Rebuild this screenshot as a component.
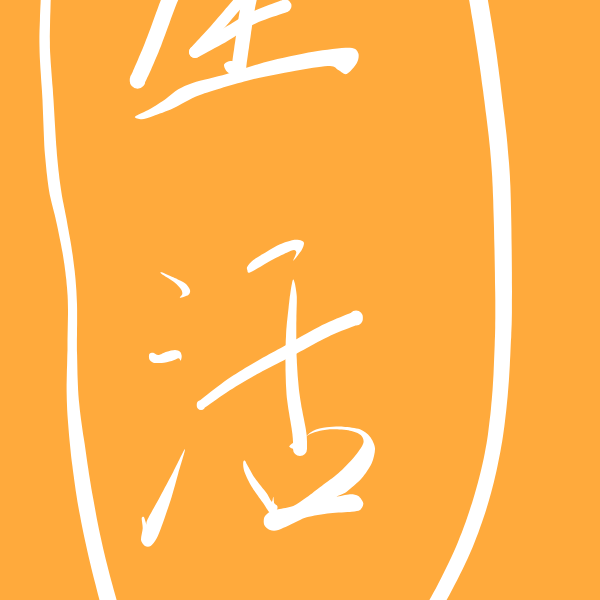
import React from "react";

type Pt = [number, number];
type BrushPt = [number, number, number];

// hand drawn mark: each stroke is either a centre line with widths, or a traced outline

const fmt = (n: number) => n.toFixed(1);

// closed smooth shape through the points
function blobPath(pts: Pt[]) {
  const n = pts.length;
  let d = `M${fmt(pts[0][0])} ${fmt(pts[0][1])}`;
  for (let i = 0; i < n; i++) {
    const p0 = pts[(i - 1 + n) % n];
    const p1 = pts[i];
    const p2 = pts[(i + 1) % n];
    const p3 = pts[(i + 2) % n];
    const c1x = p1[0] + (p2[0] - p0[0]) / 7;
    const c1y = p1[1] + (p2[1] - p0[1]) / 7;
    const c2x = p2[0] - (p3[0] - p1[0]) / 7;
    const c2y = p2[1] - (p3[1] - p1[1]) / 7;
    d += `C${fmt(c1x)} ${fmt(c1y)} ${fmt(c2x)} ${fmt(c2y)} ${fmt(p2[0])} ${fmt(p2[1])}`;
  }
  return d + "Z";
}

// outlines were read from 3x crops, so bring them back to page pixels
const fromCrop = (ox: number, oy: number, pts: Pt[]): Pt[] =>
  pts.map(([x, y]) => [ox + x / 3, oy + y / 3]);

// variable width stroke with round ends
function brushPath(pts: BrushPt[]) {
  const dense: BrushPt[] = [];
  for (let i = 0; i < pts.length - 1; i++) {
    const p0 = pts[Math.max(i - 1, 0)];
    const p1 = pts[i];
    const p2 = pts[i + 1];
    const p3 = pts[Math.min(i + 2, pts.length - 1)];
    for (let s = 0; s < 10; s++) {
      const t = s / 10;
      const cr = (a: number, b: number, c: number, e: number) =>
        0.5 * (2 * b + (c - a) * t + (2 * a - 5 * b + 4 * c - e) * t * t + (3 * b - a - 3 * c + e) * t * t * t);
      dense.push([cr(p0[0], p1[0], p2[0], p3[0]), cr(p0[1], p1[1], p2[1], p3[1]), p1[2] + (p2[2] - p1[2]) * t]);
    }
  }
  dense.push(pts[pts.length - 1]);
  const left: string[] = [];
  const right: string[] = [];
  dense.forEach((p, i) => {
    const a = dense[Math.max(i - 1, 0)];
    const b = dense[Math.min(i + 1, dense.length - 1)];
    const dx = b[0] - a[0];
    const dy = b[1] - a[1];
    const len = Math.hypot(dx, dy) || 1;
    const nx = (-dy / len) * (p[2] / 2);
    const ny = (dx / len) * (p[2] / 2);
    left.push(`${fmt(p[0] + nx)} ${fmt(p[1] + ny)}`);
    right.unshift(`${fmt(p[0] - nx)} ${fmt(p[1] - ny)}`);
  });
  const cap = (p: BrushPt) => {
    const r = fmt(p[2] / 2);
    return `M${fmt(p[0] - p[2] / 2)} ${fmt(p[1])}a${r} ${r} 0 1 0 ${fmt(p[2])} 0a${r} ${r} 0 1 0 ${fmt(-p[2])} 0Z`;
  };
  return `M${left.join("L")}L${right.join("L")}Z${cap(pts[0])}${cap(pts[pts.length - 1])}`;
}

const brushes: BrushPt[][] = [
  // oval, left side
  [[46, -8, 10], [45.7, 0, 10], [44.7, 47, 10.5], [48, 100, 11], [50.6, 150, 12], [55, 190, 12], [61.3, 220, 10.5], [68.5, 260, 9.5], [72.3, 300, 9], [72.2, 350, 9.5], [72.8, 400, 12], [78, 450, 15], [85.3, 500, 16], [95.3, 550, 16], [108, 600, 16.5], [113, 615, 16.5]],
  // oval, right side
  [[476, -12, 18.5], [478.5, 0, 18.5], [486.6, 50, 18.5], [493.3, 100, 18], [499, 150, 17.7], [502, 200, 17.7], [503.6, 300, 16.7], [502.5, 350, 16], [499.5, 400, 15.5], [493, 450, 15], [481, 500, 15.5], [463, 550, 15.5], [438, 600, 15], [424, 620, 15]],
  // left stroke on top
  [[176, -12, 16], [169.5, 0, 16], [153.5, 43, 16], [143, 68, 16], [137.5, 80, 15.5]],
  // the three joined strokes on top
  [[195, 52, 12], [215, 30, 11.5], [239, 2, 11.5], [250, -10, 11]],
  [[195, 52, 12], [225, 35, 13], [253, 18, 12], [285, 6, 13]],
  [[251, -8, 14.5], [246.7, 13, 14.5], [243.7, 33, 14.5], [239, 66, 14.5]],
  // tall stroke and the one crossing it
  [[293.3, 280, 1], [293.3, 296.7, 7], [291.3, 330, 10], [291.2, 363, 11.5], [293.3, 396.7, 13], [299.3, 433, 14], [300, 449, 14]],
  [[356, 318, 13.5], [325, 331, 13], [290, 350, 12.5], [260, 366, 11.5], [230, 384, 10.5], [201, 405, 8.5]],
];

const blobs: Pt[][] = [
  // long stroke under the top strokes
  fromCrop(100, 0, [[105, 350], [150, 327], [198, 296], [235, 268], [280, 248], [380, 222], [500, 185], [640, 155], [750, 143], [775, 160], [770, 190], [740, 222], [715, 210], [690, 198], [600, 210], [450, 240], [300, 285], [220, 325], [160, 348], [125, 358]]),
  // notch under the top strokes
  fromCrop(100, 0, [[372, 195], [390, 183], [420, 190], [420, 218], [385, 218]]),
  // two dots
  fromCrop(130, 230, [[95, 127], [130, 142], [165, 160], [180, 180], [175, 195], [150, 203], [157, 192], [153, 178], [133, 157], [95, 132]]),
  fromCrop(130, 230, [[58, 372], [70, 368], [85, 375], [110, 365], [135, 360], [150, 365], [155, 378], [152, 392], [146, 385], [125, 393], [95, 399], [70, 398], [58, 388]]),
  // hook above the tall stroke
  fromCrop(130, 230, [[352, 110], [370, 90], [410, 65], [450, 43], [490, 30], [515, 32], [522, 40], [515, 60], [490, 92], [499, 68], [492, 60], [470, 68], [430, 88], [395, 108], [358, 128], [352, 120]]),
  // left slash at the bottom
  fromCrop(130, 400, [[165, 147], [130, 215], [90, 290], [52, 360], [50, 375], [42, 352], [35, 355], [38, 385], [33, 420], [45, 438], [62, 438], [80, 415], [100, 365], [125, 290], [145, 220]]),
  // small spur on the tall stroke
  fromCrop(130, 400, [[478, 140], [492, 128], [498, 148]]),
  // box, left side
  fromCrop(130, 400, [[345, 182], [352, 195], [375, 235], [410, 280], [425, 305], [430, 290], [433, 310], [442, 318], [440, 330], [420, 338], [400, 310], [365, 260], [345, 220], [340, 200], [340, 185]]),
  // box, top right and bottom
  fromCrop(130, 400, [[525, 112], [550, 92], [590, 82], [640, 80], [690, 88], [720, 110], [735, 145], [725, 190], [695, 235], [650, 275], [620, 290], [660, 283], [685, 288], [700, 310], [690, 330], [665, 335], [600, 340], [530, 352], [490, 370], [445, 390], [420, 390], [403, 375], [403, 352], [420, 335], [445, 328], [490, 318], [530, 292], [575, 258], [625, 220], [672, 172], [700, 130], [692, 105], [660, 92], [610, 88], [570, 92], [540, 102]]),
];

export default function App() {
  return (
    <div className="w-[600px] h-[600px] overflow-hidden bg-[#ffaa3c]">
      <svg viewBox="0 0 600 600" className="block w-full h-full fill-white" role="img" aria-label="生活">
        {brushes.map((b, i) => (
          <path key={`b${i}`} d={brushPath(b)} />
        ))}
        {blobs.map((b, i) => (
          <path key={`s${i}`} d={blobPath(b)} />
        ))}
      </svg>
    </div>
  );
}
